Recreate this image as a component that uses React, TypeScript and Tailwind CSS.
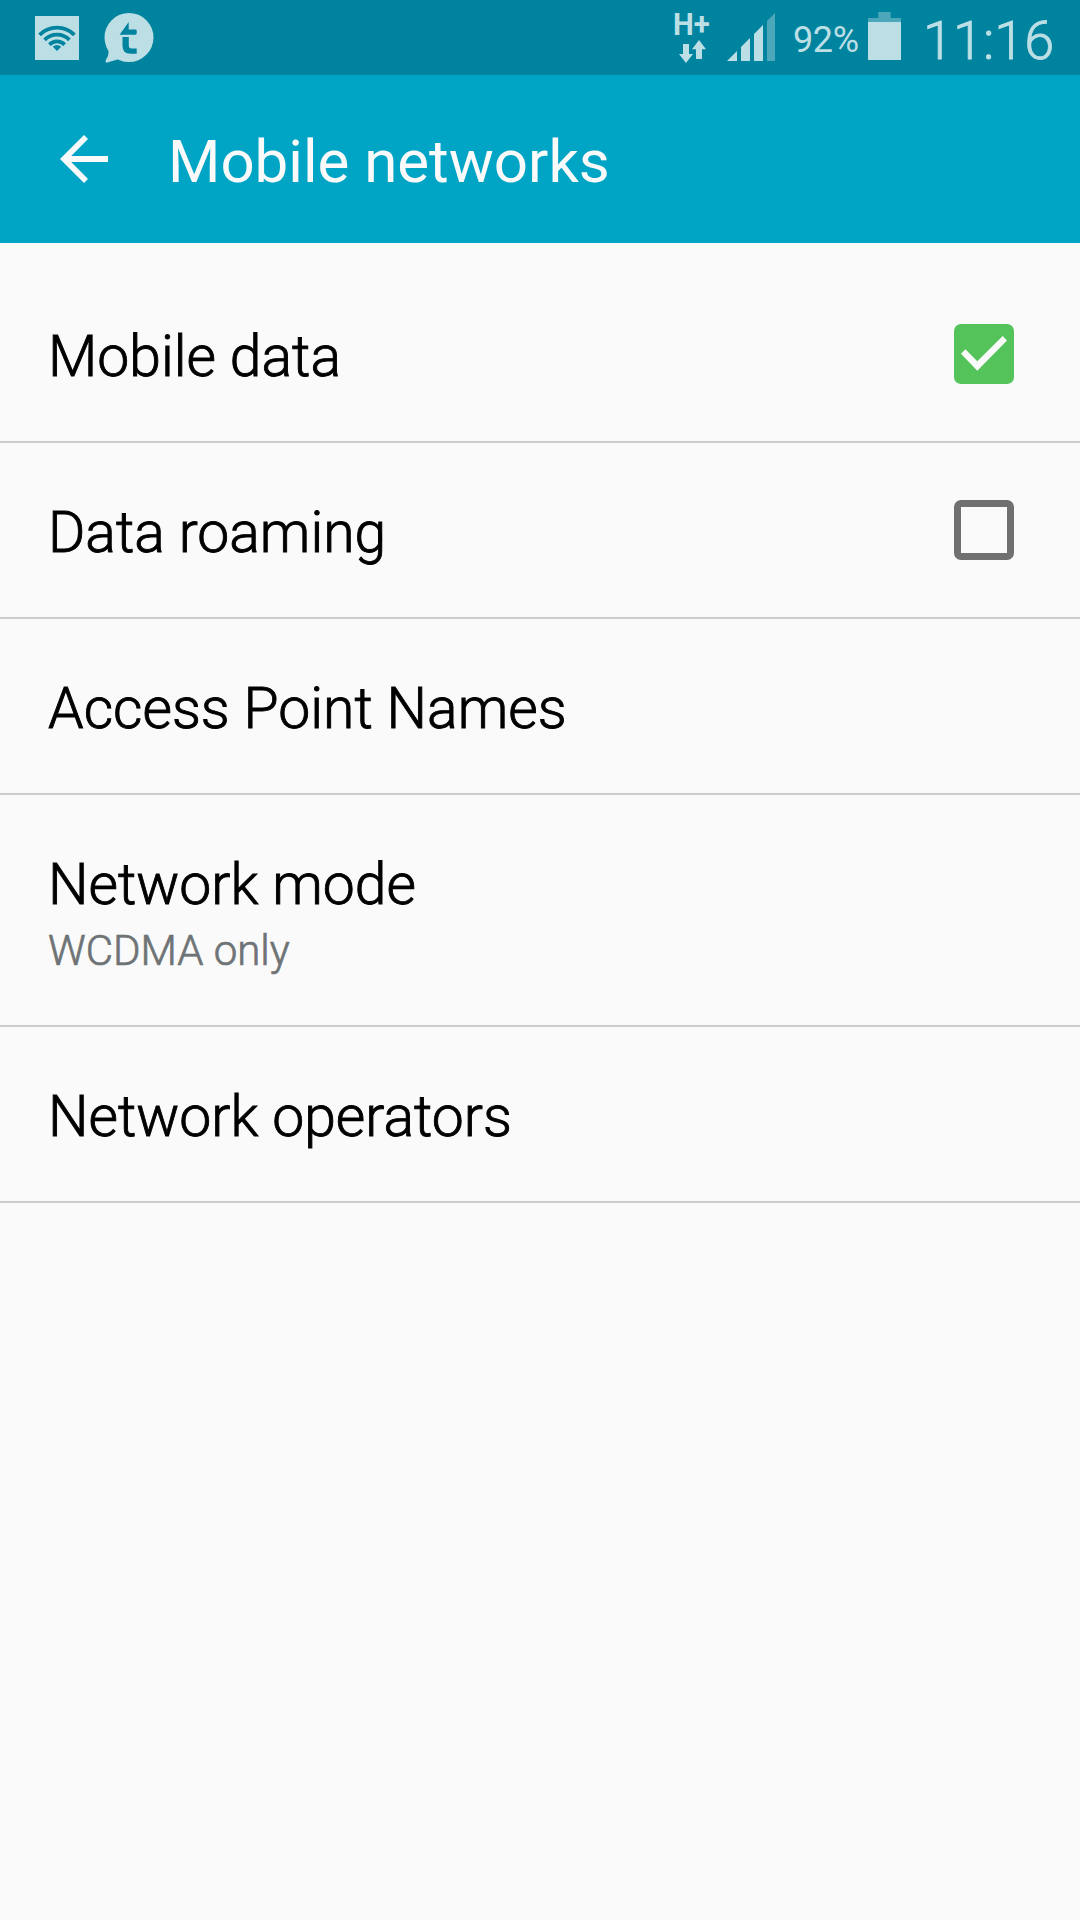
import { useState } from "react";

type Item = {
    id: string;
    title: string;
    summary?: string;
    toggle?: boolean;
};

const ITEMS: Item[] = [
    { id: "data", title: "Mobile data", toggle: true },
    { id: "roaming", title: "Data roaming", toggle: true },
    { id: "apn", title: "Access Point Names" },
    { id: "mode", title: "Network mode", summary: "WCDMA only" },
    { id: "operators", title: "Network operators" },
];

function WifiIcon() {
    return (
        <svg width="44" height="44" viewBox="0 0 44 44">
            <rect width="44" height="44" fill="#bcdfe5" />
            <g fill="none" stroke="#00839f" strokeWidth="3.8">
                <path d="M4.6 18.8A24.6 24.6 0 0 1 39.4 18.8" />
                <path d="M9.6 23.8A17.5 17.5 0 0 1 34.4 23.8" />
                <path d="M14.4 28.6A10.8 10.8 0 0 1 29.6 28.6" />
            </g>
            <path d="M22 35L17.8 30.8A6 6 0 0 1 26.2 30.8Z" fill="#00839f" />
        </svg>
    );
}

function BubbleIcon() {
    return (
        <svg width="50" height="50" viewBox="0 0 50 50">
            <circle cx="25" cy="24.5" r="24.5" fill="#bcdfe5" />
            <path d="M4.5 36Q5.5 42 1.6 47.5Q1.4 50.5 4 49.3L17 45.5Z" fill="#bcdfe5" />
            <path d="M24.7 9V16.5H31.5Q32.7 16.5 32.7 17.7V20.3Q32.7 21.7 31.5 21.7H15.6Z" fill="#00839f" />
            <path d="M18.5 24H24.8V33Q24.8 35.4 27.2 35.4H32.7V40.8H26.5Q18.5 40.8 18.5 32.8Z" fill="#00839f" />
        </svg>
    );
}

function DataArrows() {
    return (
        <svg width="28" height="24" viewBox="0 0 28 24" fill="#bcdfe5">
            <path d="M4 4H10V14H14L7 23L0 14H4Z" />
            <path d="M20 0L27 9.3H23V19H17V9.3H13Z" />
        </svg>
    );
}

function SignalIcon() {
    return (
        <svg width="48" height="48" viewBox="0 0 48 48" fill="#bcdfe5">
            <path d="M0 48L10 38V48Z" />
            <path d="M14 34L23 25V48H14Z" />
            <path d="M27 21L36 12V48H27Z" />
            <path d="M40 8L48 0V48H40Z" fill="#4da7ba" />
        </svg>
    );
}

function BatteryIcon() {
    return (
        <svg width="33" height="48" viewBox="0 0 33 48">
            <path d="M0 6H10.3V0H22.7V6H33V10H0Z" fill="#4da7ba" />
            <rect y="10" width="33" height="38" fill="#bcdfe5" />
        </svg>
    );
}

function StatusBar() {
    return (
        <div className="flex h-[75px] items-start bg-[#00839f] text-[#bcdfe5]">
            <div className="ml-[35px] mt-4">
                <WifiIcon />
            </div>
            <div className="ml-[25px] mt-[13px]">
                <BubbleIcon />
            </div>
            <div className="ml-auto flex items-start whitespace-nowrap">
                <div className="w-[38px] pt-2">
                    <div className="ml-px origin-left scale-x-[0.92] text-[32px] font-bold leading-8">H+</div>
                    <div className="ml-[7px]">
                        <DataArrows />
                    </div>
                </div>
                <div className="ml-[17px] mt-[13px]">
                    <SignalIcon />
                </div>
                <div className="ml-[18px] mt-[19px] w-[67px] text-[36px] leading-[42px] tracking-[-0.4px]">92%</div>
                <div className="ml-2 mt-3">
                    <BatteryIcon />
                </div>
                <div className="ml-[22px] mt-2 w-[157px] text-[54px] font-light leading-[66px] [-webkit-text-stroke:0.8px]">11:16</div>
            </div>
        </div>
    );
}

function Checkbox({ checked }: { checked: boolean }) {
    if (!checked) {
        return (
            <svg width="60" height="60" viewBox="0 0 60 60">
                <path fillRule="evenodd" d="M7 0H53A7 7 0 0 1 60 7V53A7 7 0 0 1 53 60H7A7 7 0 0 1 0 53V7A7 7 0 0 1 7 0ZM7 7V53H53V7Z" fill="#707070" />
            </svg>
        );
    }
    return (
        <svg width="60" height="60" viewBox="0 0 60 60">
            <rect width="60" height="60" rx="7" fill="#54c45a" />
            <path d="M7 29.7L11.4 25.3L23.3 37.2L48.7 12L53 16.5L23.3 46.7Z" fill="#fafafa" />
        </svg>
    );
}

export default function App() {
    const [checked, setChecked] = useState<Record<string, boolean>>({ data: true, roaming: false });

    const toggle = (item: Item) => {
        if (item.toggle) setChecked(c => ({ ...c, [item.id]: !c[item.id] }));
    };

    return (
        <div className="min-h-screen w-full bg-[#fafafa] font-['Roboto',sans-serif]">
            <StatusBar />

            <header className="flex h-[168px] items-center bg-[#00a5c6] pl-[60px] text-[#fafafa]">
                <svg width="48" height="48" viewBox="0 0 48 48" fill="currentColor">
                    <path d="M0 24L24 0L28 4L11.2 21H48V27H11.2L28 44L24 48Z" />
                </svg>
                <h1 className="ml-[60px] pt-1.5 text-[60px] leading-[72px]">Mobile networks</h1>
            </header>

            {/* light face with a thin stroke, sits between light and regular */}
            <ul className="pt-6 font-light [-webkit-text-stroke:0.9px]">
                {ITEMS.map(item => (
                    <li key={item.id} onClick={() => toggle(item)}
                        className="flex items-center justify-between border-b-2 border-[#cdcdcd] pl-12 pr-[66px]">
                        <div className="pb-[50px] pt-14">
                            <div className="text-[57px] leading-[68px] text-black">{item.title}</div>
                            {item.summary && (
                                <div className="mt-[7px] text-[42px] leading-[49px] text-[#6e7375] [-webkit-text-stroke:0.7px]">{item.summary}</div>
                            )}
                        </div>
                        {item.toggle && <Checkbox checked={!!checked[item.id]} />}
                    </li>
                ))}
            </ul>
        </div>
    );
}
